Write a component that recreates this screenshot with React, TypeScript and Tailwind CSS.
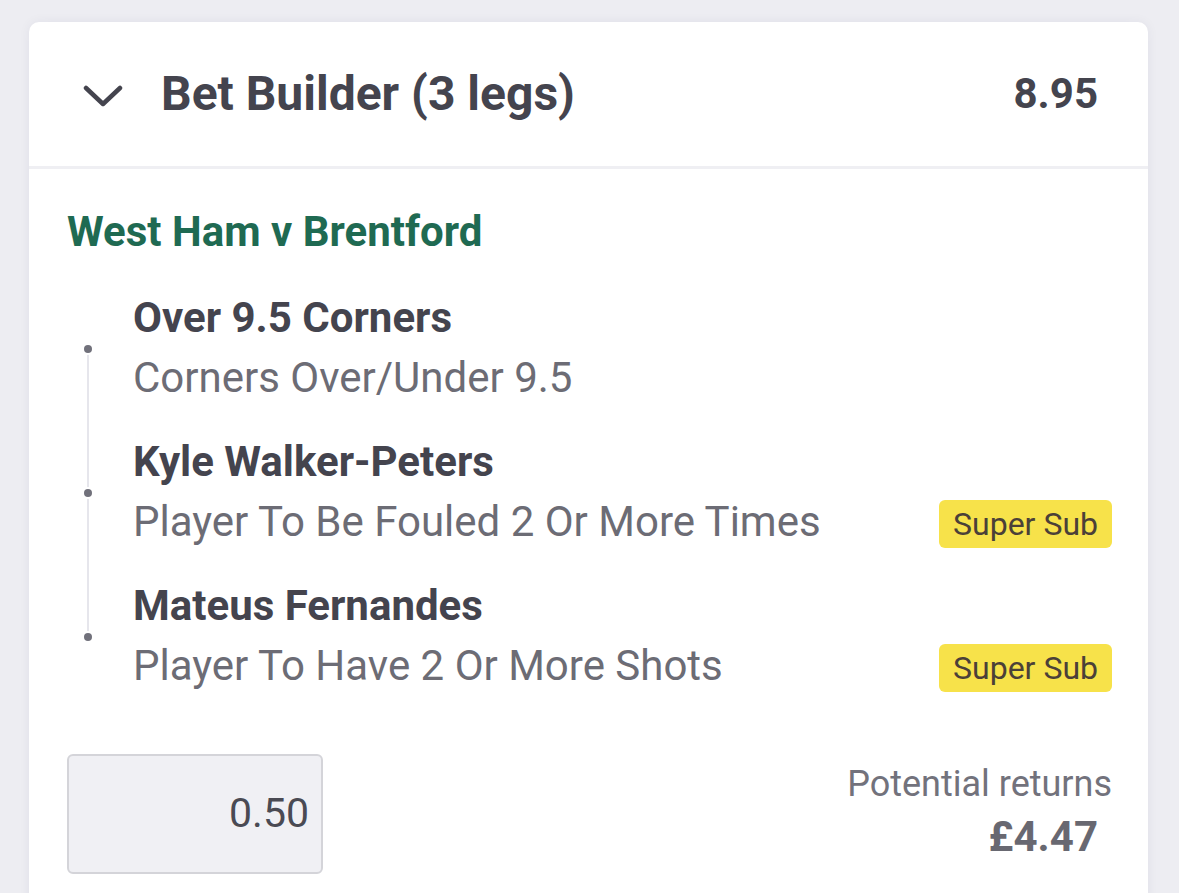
const legs = [
  { title: "Over 9.5 Corners", market: "Corners Over/Under 9.5", superSub: false },
  { title: "Kyle Walker-Peters", market: "Player To Be Fouled 2 Or More Times", superSub: true },
  { title: "Mateus Fernandes", market: "Player To Have 2 Or More Shots", superSub: true },
];

function Chevron() {
  return (
    <svg width="40" height="24" viewBox="0 0 40 24" fill="none" className="mt-[4px]">
      <polyline points="3,4 20,20 37,4" stroke="#44444e" strokeWidth="4.5" strokeLinecap="round" strokeLinejoin="round" />
    </svg>
  );
}

export default function App() {
  return (
    <div className="min-h-screen bg-[#ededf2] pt-[22px] pl-[29px] pr-[31px] font-['Roboto',sans-serif]">
      <div className="bg-white rounded-t-[10px] shadow-[0_0_12px_rgba(40,40,80,0.06)]">
        {/* header */}
        <div className="h-[144px] flex items-center pl-[54px] pr-[50px]">
          <Chevron />
          <h1 className="ml-[38px] text-[48px] font-bold text-[#44444e] leading-none">
            Bet Builder (3 legs)
          </h1>
          <span className="ml-auto text-[42px] font-bold text-[#44444e] leading-none">8.95</span>
        </div>
        <div className="h-[3px] bg-[#efeff3]" />

        {/* body */}
        <div className="pt-[38px] pl-[38px] pr-[36px] pb-[40px]">
          <h2 className="text-[42px] leading-[50px] font-bold text-[#1f6a52]">West Ham v Brentford</h2>

          <div className="relative mt-[36px] flex flex-col gap-[34px]">
            <div className="absolute left-[20px] top-[57px] h-[288px] w-[2px] bg-[#e6e6ec]" />
            {legs.map((leg, index) => (
              <div key={index} className="flex">
                <div className="w-[66px] shrink-0 flex flex-col items-start pl-[17px]">
                  <div className="h-[52px]" />
                  <div className="relative w-[8px] h-[8px] rounded-full bg-[#71717b] ring-2 ring-white" />
                </div>
                <div className="flex-1 flex flex-col gap-[10px]">
                  <div className="text-[42px] leading-[50px] font-bold text-[#44444e]">{leg.title}</div>
                  <div className="flex items-center justify-between h-[50px]">
                    <span className="text-[42px] leading-[50px] text-[#6c6c75]">{leg.market}</span>
                    {leg.superSub && (
                      <span className="h-[48px] px-[14px] mt-[3px] flex items-center rounded-[6px] bg-[#f7e24a] text-[32px] text-[#4b4038]">
                        Super Sub
                      </span>
                    )}
                  </div>
                </div>
              </div>
            ))}
          </div>

          {/* stake + returns */}
          <div className="mt-[63px] flex items-center justify-between">
            <div className="w-[256px] h-[120px] rounded-[6px] border-2 border-[#d4d4d9] bg-[#f0f0f4] flex items-center justify-end pr-[12px]">
              <span className="text-[41px] text-[#4a4a53]">0.50</span>
            </div>
            <div className="flex flex-col items-end">
              <span className="text-[36px] leading-[46px] text-[#72727c]">Potential returns</span>
              <span className="mr-[14px] text-[42px] leading-[60px] font-bold text-[#686871]">£4.47</span>
            </div>
          </div>
        </div>
      </div>
    </div>
  );
}
